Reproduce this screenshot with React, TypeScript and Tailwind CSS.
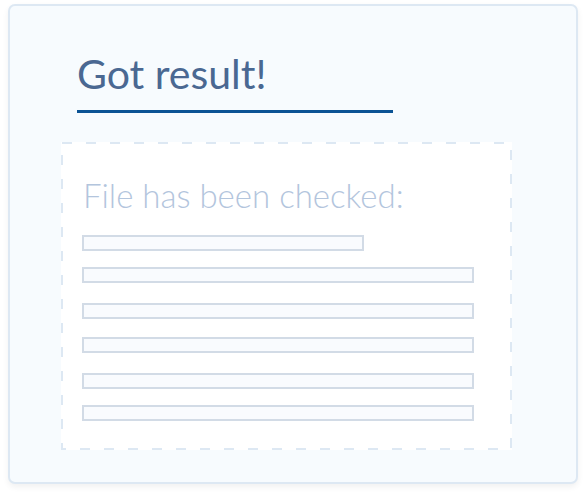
const c = {
  cardBg: '#f7fbfe',
  cardLine: '#dde8f3',
  heading: '#4a6892',
  accent: '#0b5394',
  sub: '#b3c5dd',
  barLine: '#d2dbe6',
  barFill: '#f9fbfe',
} as const

// gaps above each bar, in px
const bars: { w: string; mt: string }[] = [
  { w: 'w-[282px]', mt: 'mt-0' },
  { w: 'w-[392px]', mt: 'mt-[16px]' },
  { w: 'w-[392px]', mt: 'mt-[20px]' },
  { w: 'w-[392px]', mt: 'mt-[18px]' },
  { w: 'w-[392px]', mt: 'mt-[20px]' },
  { w: 'w-[392px]', mt: 'mt-[16px]' },
]

function Bar({ w, mt }: { w: string; mt: string }) {
  return <div className={`${w} ${mt} h-[16px] border-2 border-[#d2dbe6] bg-[#f9fbfe]`} />
}

export default function App() {
  return (
    <div className="w-[586px] h-[496px] bg-white pt-[4px] pl-[8px] font-['Lato','Noto_Sans',sans-serif]">
      <div className="w-[570px] h-[480px] rounded-[7px] border-2 border-[#dde8f3] bg-[#f7fbfe] shadow-[0_3px_6px_rgba(0,0,0,0.06)] pt-[44px] pl-[51px]">
        <div className="pl-[16px]">
          <h1 className="text-[41px] leading-[48px] font-normal text-[#4a6892]">Got result!</h1>
          <div className="w-[316px] h-[3px] mt-[12px] bg-[#0b5394]" />
        </div>

        <div className="relative mt-[29px] w-[451px] h-[308px] bg-white pt-[34px] pl-[21px]">
          <svg className="absolute inset-0" width="451" height="308" viewBox="0 0 451 308" fill="none">
            <rect x="1" y="1" width="449" height="306" stroke={c.cardLine} strokeWidth="2" strokeDasharray="10 14" />
          </svg>
          <p className="relative pl-[1px] text-[33px] leading-[38px] font-light text-[#b3c5dd]">File has been checked:</p>
          <div className="relative mt-[21px]">
            {bars.map((b, i) => (
              <Bar key={i} w={b.w} mt={b.mt} />
            ))}
          </div>
        </div>
      </div>
    </div>
  )
}
